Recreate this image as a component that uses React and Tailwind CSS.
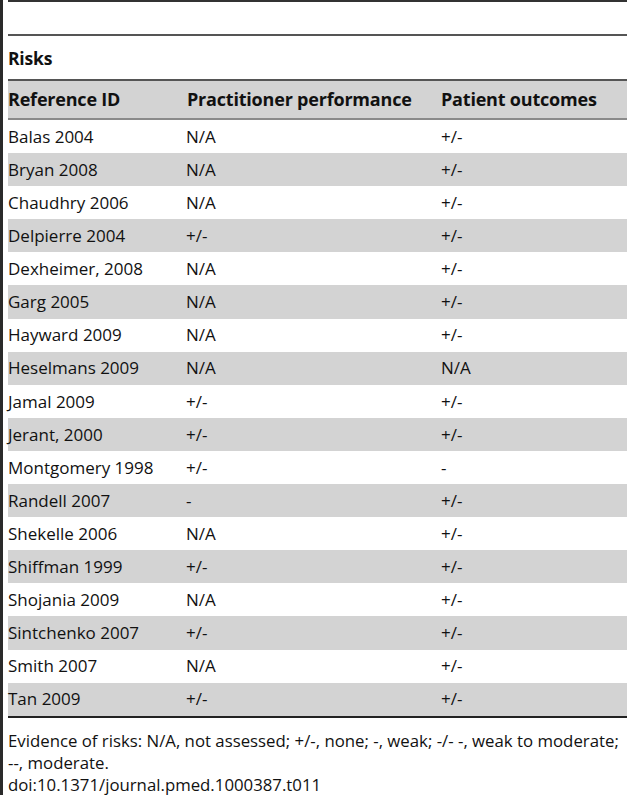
import React from "react";

const rows = [
  ["Balas 2004", "N/A", "+/-"],
  ["Bryan 2008", "N/A", "+/-"],
  ["Chaudhry 2006", "N/A", "+/-"],
  ["Delpierre 2004", "+/-", "+/-"],
  ["Dexheimer, 2008", "N/A", "+/-"],
  ["Garg 2005", "N/A", "+/-"],
  ["Hayward 2009", "N/A", "+/-"],
  ["Heselmans 2009", "N/A", "N/A"],
  ["Jamal 2009", "+/-", "+/-"],
  ["Jerant, 2000", "+/-", "+/-"],
  ["Montgomery 1998", "+/-", "-"],
  ["Randell 2007", "-", "+/-"],
  ["Shekelle 2006", "N/A", "+/-"],
  ["Shiffman 1999", "+/-", "+/-"],
  ["Shojania 2009", "N/A", "+/-"],
  ["Sintchenko 2007", "+/-", "+/-"],
  ["Smith 2007", "N/A", "+/-"],
  ["Tan 2009", "+/-", "+/-"],
];

export default function App() {
  return (
    <div
      className="w-[627px] h-[800px] bg-white flex text-[17px] text-[#111]"
      style={{ fontFamily: '"Open Sans", "Liberation Sans", sans-serif' }}
    >
      <div className="w-[3px] h-[795px] bg-[#2a2a2a] shrink-0" />
      <div className="flex-1 pl-[5px] flex flex-col">
        <div className="h-[2px] bg-[#333]" />
        <div className="h-[32px]" />
        <div className="h-[2px] bg-[#555]" />
        <div className="h-[43px] flex items-center font-bold text-[17.5px] tracking-[-0.2px] pt-[2px]">Risks</div>
        <div className="h-[2px] bg-[#555]" />
        <div className="h-[37px] bg-[#d3d3d3] flex items-center font-bold text-[18px] tracking-[-0.2px]">
          <div className="w-[179px]">Reference ID</div>
          <div className="w-[254px]">Practitioner performance</div>
          <div>Patient outcomes</div>
        </div>
        <div className="h-[2px] bg-[#8a8a8a]" />
        {rows.map((r, i) => (
          <div
            key={i}
            className={`h-[33.1px] flex items-center ${i % 2 === 1 ? "bg-[#d3d3d3]" : "bg-white"}`}
          >
            <div className="w-[178px] whitespace-nowrap">{r[0]}</div>
            <div className="w-[255px]">{r[1]}</div>
            <div>{r[2]}</div>
          </div>
        ))}
        <div className="h-[2px] bg-[#222]" />
        <div className="pt-[12px] leading-[22px] text-[16.8px] whitespace-nowrap">
          Evidence of risks: N/A, not assessed; +/-, none; -, weak; -/- -, weak to moderate;
          <br />
          --, moderate.
          <br />
          doi:10.1371/journal.pmed.1000387.t011
        </div>
      </div>
    </div>
  );
}
